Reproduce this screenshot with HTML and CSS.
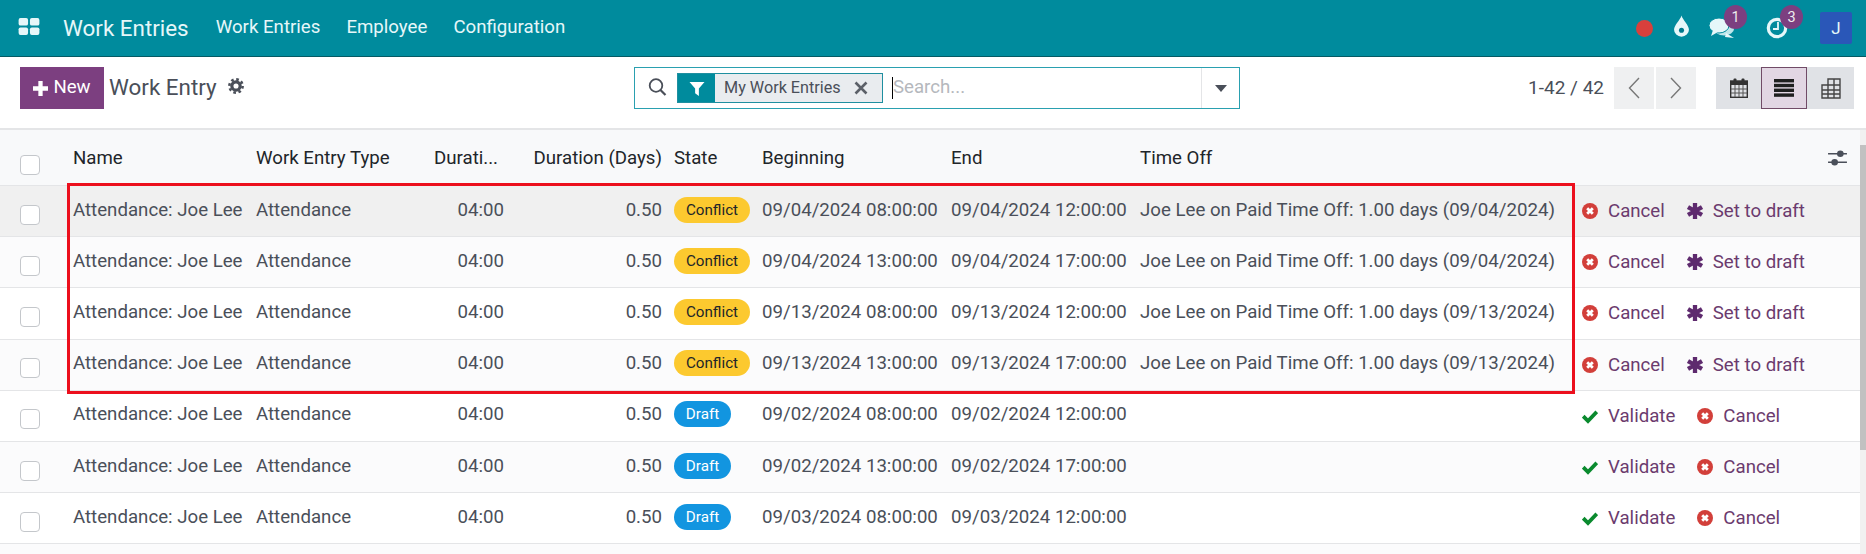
FILE: index.html
```html
<!DOCTYPE html>
<html lang="en">
<head>
<meta charset="utf-8">
<title>Work Entries</title>
<link rel="stylesheet" href="styles.css">
</head>
<body>
<header class="navbar">
  <svg class="apps" viewBox="0 0 22 18"><rect x="0" y="0" width="10" height="8" rx="2"/><rect x="12" y="0" width="10" height="8" rx="2"/><rect x="0" y="10" width="10" height="8" rx="2"/><rect x="12" y="10" width="10" height="8" rx="2"/></svg>
  <span class="brand">Work Entries</span>
  <nav class="menu"><a>Work Entries</a><a>Employee</a><a>Configuration</a></nav>
  <div class="systray">
    <span class="dot"></span>
    <svg class="drop" viewBox="0 0 16 20"><path d="M8 0C9 4 15 9 15 13.5A7 6.5 0 0 1 1 13.5C1 9 7 4 8 0Z" fill="#e6f7f9"/><circle cx="8" cy="14" r="2.4" fill="#00798c"/></svg>
    <span class="tray-item chat">
      <svg viewBox="0 0 26 22"><ellipse cx="15" cy="12" rx="10" ry="6.5" fill="#bfe6ea"/><path d="M17 16l8 5-9-1z" fill="#e6f7f9"/><ellipse cx="10" cy="8.5" rx="10" ry="7.5" fill="#e6f7f9" stroke="#008b9d"/><path d="M4 13l-2 6 7-4z" fill="#e6f7f9"/></svg>
      <span class="badge">1</span>
    </span>
    <span class="tray-item clock">
      <svg viewBox="0 0 22 22"><circle cx="11" cy="11" r="8.7" fill="none" stroke="#e6f7f9" stroke-width="3.2"/><path d="M12 5v7H7" fill="none" stroke="#e6f7f9" stroke-width="1.8"/></svg>
      <span class="badge">3</span>
    </span>
    <span class="avatar">J</span>
  </div>
</header>

<section class="control">
  <div class="title-side">
    <button class="new"><svg viewBox="0 0 14 14"><path d="M5 0h4v5h5v4H9v5H5V9H0V5h5z"/></svg><span class="lift">New</span></button>
    <span class="crumb lift">Work Entry</span>
    <svg class="gear" viewBox="0 0 20 20"><circle cx="10" cy="10" r="5.2" fill="none" stroke="#4a4f59" stroke-width="4"/><circle cx="10" cy="10" r="8.3" fill="none" stroke="#4a4f59" stroke-width="3.2" stroke-dasharray="3.3 3.22"/></svg>
  </div>
  <div class="search">
    <svg class="mag" viewBox="0 0 18 18"><circle cx="7.5" cy="7.5" r="6.3" fill="none" stroke="#4a4f59" stroke-width="1.8"/><path d="M12 12l5 5" stroke="#4a4f59" stroke-width="2.2"/></svg>
    <div class="chip">
      <span class="chip-icon"><svg viewBox="0 0 16 16"><path d="M0 1h16L10 8v8l-4-3V8z" fill="#fff"/></svg></span>
      <span class="chip-label lift">My Work Entries</span>
      <svg class="chip-x" viewBox="0 0 14 14"><path d="M1.5 1.5l11 11M12.5 1.5l-11 11" stroke="#5b6068" stroke-width="2.6"/></svg>
    </div>
    <span class="caret"></span>
    <input class="search-input" placeholder="Search...">
    <span class="search-drop"><svg viewBox="0 0 12 7"><path d="M0 0h12L6 7z" fill="#4a4f59"/></svg></span>
  </div>
  <div class="right-side">
    <span class="pager-text lift">1-42 / 42</span>
    <div class="pager">
      <span class="pg"><svg viewBox="0 0 12 22"><path d="M11 1L1.5 11 11 21" fill="none" stroke="#777" stroke-width="1.4"/></svg></span>
      <span class="pg"><svg viewBox="0 0 12 22"><path d="M1 1l9.500 10L1 21" fill="none" stroke="#777" stroke-width="1.4"/></svg></span>
    </div>
    <div class="views">
      <span class="view v1"><svg viewBox="0 0 18 20"><rect x="0.700" y="3" width="16.600" height="16.300" fill="none" stroke="#333" stroke-width="1.400"/><rect x="1" y="3" width="16" height="4" fill="#333"/><path d="M1 11h16M1 15h16M5 7v12M9 7v12M13 7v12" stroke="#555"/><rect x="3.500" y="0.500" width="3" height="5" rx="1" fill="#333"/><rect x="11.500" y="0.500" width="3" height="5" rx="1" fill="#333"/></svg></span>
      <span class="view v2 active"><svg viewBox="0 0 20 18"><rect width="20" height="3.400"/><rect y="4.800" width="20" height="3.400"/><rect y="9.600" width="20" height="3.400"/><rect y="14.400" width="20" height="3.400"/></svg></span>
      <span class="view v3"><svg viewBox="0 0 20 21"><path d="M7 1h12v19H1V7h6zM7 1v19M13 1v19M1 12h18M1 16h18M7 7h12" fill="none" stroke="#444" stroke-width="1.400"/></svg></span>
    </div>
  </div>
</section>

<main class="list">
  <div class="row head">
    <span class="cb"><input type="checkbox"></span>
    <span>Name</span><span>Work Entry Type</span><span class="ell">Durati...</span><span class="num">Duration (Days)</span><span>State</span><span>Beginning</span><span>End</span><span>Time Off</span>
    <span class="opt"><svg viewBox="0 0 20 18"><path d="M0 4h20M0 13h20" stroke="#4a4f59" stroke-width="1.400"/><circle cx="13" cy="4" r="3.500" fill="#4a4f59"/><circle cx="7" cy="13" r="3.500" fill="#4a4f59"/></svg></span>
  </div>

  <div class="row body hover">
    <span class="cb"><input type="checkbox"></span><span>Attendance: Joe Lee</span><span>Attendance</span><span class="num">04:00</span><span class="num">0.50</span><span><b class="pill conflict">Conflict</b></span><span>09/04/2024 08:00:00</span><span>09/04/2024 12:00:00</span><span>Joe Lee on Paid Time Off: 1.00 days (09/04/2024)</span>
    <span class="acts"><a><svg class="ic" viewBox="0 0 16 16"><use href="#i-x"/></svg>Cancel</a><a><svg class="ic" viewBox="0 0 16 16"><use href="#i-star"/></svg>Set to draft</a></span>
  </div>
  <div class="row body">
    <span class="cb"><input type="checkbox"></span><span>Attendance: Joe Lee</span><span>Attendance</span><span class="num">04:00</span><span class="num">0.50</span><span><b class="pill conflict">Conflict</b></span><span>09/04/2024 13:00:00</span><span>09/04/2024 17:00:00</span><span>Joe Lee on Paid Time Off: 1.00 days (09/04/2024)</span>
    <span class="acts"><a><svg class="ic" viewBox="0 0 16 16"><use href="#i-x"/></svg>Cancel</a><a><svg class="ic" viewBox="0 0 16 16"><use href="#i-star"/></svg>Set to draft</a></span>
  </div>
  <div class="row body">
    <span class="cb"><input type="checkbox"></span><span>Attendance: Joe Lee</span><span>Attendance</span><span class="num">04:00</span><span class="num">0.50</span><span><b class="pill conflict">Conflict</b></span><span>09/13/2024 08:00:00</span><span>09/13/2024 12:00:00</span><span>Joe Lee on Paid Time Off: 1.00 days (09/13/2024)</span>
    <span class="acts"><a><svg class="ic" viewBox="0 0 16 16"><use href="#i-x"/></svg>Cancel</a><a><svg class="ic" viewBox="0 0 16 16"><use href="#i-star"/></svg>Set to draft</a></span>
  </div>
  <div class="row body">
    <span class="cb"><input type="checkbox"></span><span>Attendance: Joe Lee</span><span>Attendance</span><span class="num">04:00</span><span class="num">0.50</span><span><b class="pill conflict">Conflict</b></span><span>09/13/2024 13:00:00</span><span>09/13/2024 17:00:00</span><span>Joe Lee on Paid Time Off: 1.00 days (09/13/2024)</span>
    <span class="acts"><a><svg class="ic" viewBox="0 0 16 16"><use href="#i-x"/></svg>Cancel</a><a><svg class="ic" viewBox="0 0 16 16"><use href="#i-star"/></svg>Set to draft</a></span>
  </div>
  <div class="row body">
    <span class="cb"><input type="checkbox"></span><span>Attendance: Joe Lee</span><span>Attendance</span><span class="num">04:00</span><span class="num">0.50</span><span><b class="pill draft">Draft</b></span><span>09/02/2024 08:00:00</span><span>09/02/2024 12:00:00</span><span></span>
    <span class="acts"><a><svg class="ic" viewBox="0 0 16 16"><use href="#i-check"/></svg>Validate</a><a><svg class="ic" viewBox="0 0 16 16"><use href="#i-x"/></svg>Cancel</a></span>
  </div>
  <div class="row body">
    <span class="cb"><input type="checkbox"></span><span>Attendance: Joe Lee</span><span>Attendance</span><span class="num">04:00</span><span class="num">0.50</span><span><b class="pill draft">Draft</b></span><span>09/02/2024 13:00:00</span><span>09/02/2024 17:00:00</span><span></span>
    <span class="acts"><a><svg class="ic" viewBox="0 0 16 16"><use href="#i-check"/></svg>Validate</a><a><svg class="ic" viewBox="0 0 16 16"><use href="#i-x"/></svg>Cancel</a></span>
  </div>
  <div class="row body">
    <span class="cb"><input type="checkbox"></span><span>Attendance: Joe Lee</span><span>Attendance</span><span class="num">04:00</span><span class="num">0.50</span><span><b class="pill draft">Draft</b></span><span>09/03/2024 08:00:00</span><span>09/03/2024 12:00:00</span><span></span>
    <span class="acts"><a><svg class="ic" viewBox="0 0 16 16"><use href="#i-check"/></svg>Validate</a><a><svg class="ic" viewBox="0 0 16 16"><use href="#i-x"/></svg>Cancel</a></span>
  </div>
  <div class="row body"></div>

  <div class="highlight"></div>
  <div class="scrollbar"><span class="thumb"></span></div>
</main>

<svg class="defs" width="0" height="0">
  <symbol id="i-x" viewBox="0 0 16 16"><circle cx="8" cy="8" r="8" fill="#d23f3a"/><path d="M5.200 5.200l5.600 5.600M10.800 5.200l-5.600 5.600" stroke="#fff" stroke-width="2.800"/></symbol>
  <symbol id="i-star" viewBox="0 0 16 16"><path d="M8 8V0M8 8l7-4M8 8l7 4M8 8v8M8 8l-7 4M8 8L1 4" stroke="#5e2a6e" stroke-width="4.300"/></symbol>
  <symbol id="i-check" viewBox="0 0 16 16"><path d="M1.200 8.200l4.800 4.800L14.800 3.800" fill="none" stroke="#0a8a2e" stroke-width="3.800"/></symbol>
</svg>
</body>
</html>
```
FILE: styles.css
```css
* { box-sizing: border-box; }
html, body { margin: 0; height: 100%; overflow: hidden; }
body { font-family: Roboto, "Noto Sans", sans-serif; font-size: 18.660px; color: #4a4f59; background: #fff; }
svg { display: block; }
.defs { position: absolute; }
.lift { padding-bottom: 2px; }

.navbar { height: 57px; background: #008b9d; border-bottom: 1px solid #045a64; display: flex; align-items: center; padding-left: 18px; color: #e6f7f9; }
.apps { width: 22px; height: 17px; fill: #e6f7f9; margin-bottom: 4px; }
.brand { font-size: 22.400px; margin-left: 23px; margin-right: 27px; }
.menu { display: flex; gap: 26px; font-size: 18.660px; margin-bottom: 2px; }
.systray { margin-left: auto; display: flex; align-items: center; padding-right: 14px; }
.dot { width: 17px; height: 17px; border-radius: 50%; background: #d8403c; margin-right: 20px; }
.drop { width: 17px; height: 22px; margin-bottom: 4px; margin-right: 19px; }
.tray-item { position: relative; display: block; }
.chat { width: 26px; height: 22px; margin-right: 31px; }
.chat svg { width: 26px; height: 22px; }
.clock { width: 22px; height: 22px; margin-right: 32px; }
.clock svg { width: 22px; height: 22px; }
.badge { position: absolute; top: -12px; left: 15px; width: 23px; height: 24px; border-radius: 50%; background: #7c3f80; color: #eee; font-size: 14.500px; display: flex; align-items: center; justify-content: center; }
.clock .badge { left: 14px; }
.avatar { width: 32px; height: 32px; background: #2a57b8; color: #e6f7f9; display: flex; align-items: center; justify-content: center; font-size: 17px; border-radius: 2px; }

.control { height: 73px; border-bottom: 2px solid #e4e5e7; display: flex; padding: 10px 12px 0 20px; align-items: flex-start; }
.title-side { width: 614px; display: flex; align-items: center; height: 42px; }
.new { width: 84px; height: 42px; background: #7c3f80; border: 0; color: #fff; font: inherit; display: flex; align-items: center; justify-content: center; gap: 5px; padding: 0; }
.new svg { width: 15px; height: 15px; fill: #fff; }
.crumb { font-size: 22.400px; margin-left: 5px; }
.gear { width: 16px; height: 16px; margin-left: 11px; margin-bottom: 4px; }

.search { width: 606px; height: 42px; border: 1px solid #2aa0b0; display: flex; align-items: center; padding-left: 13px; }
.mag { width: 19px; height: 18px; margin-bottom: 2px; }
.chip { display: flex; align-items: center; width: 206px; height: 30px; margin-left: 10px; border: 1px solid #1f8fa0; background: #e9ecef; }
.chip-icon { width: 37px; height: 100%; background: #008b9d; display: flex; align-items: center; justify-content: center; }
.chip-icon svg { width: 16px; height: 15px; }
.chip-label { margin-left: 9px; font-size: 16.200px; width: 120px; white-space: nowrap; }
.chip-x { width: 14px; height: 14px; margin-left: 10px; }
.caret { width: 1px; height: 22px; background: #000; margin-left: 9px; flex: none; }
.search-input { flex: 1; min-width: 0; border: 0; outline: 0; padding: 0 0 2px; font: inherit; background: transparent; }
.search-input::placeholder { color: #b5b8bd; }
.search-drop { width: 38px; height: 100%; border-left: 1px solid #e4e5e7; display: flex; align-items: center; justify-content: center; }
.search-drop svg { width: 12px; height: 7px; }

.right-side { margin-left: auto; display: flex; align-items: center; height: 42px; }
.pager-text { font-size: 19px; margin-right: 10px; }
.pager { display: flex; gap: 2px; margin-right: 20px; }
.pg { width: 40px; height: 42px; background: #eff0f1; display: flex; align-items: center; justify-content: center; }
.pg svg { width: 12px; height: 22px; }
.views { display: flex; }
.view { height: 42px; background: #e0e2e6; display: flex; align-items: center; justify-content: center; }
.v1 { width: 45px; }
.v2 { width: 46px; }
.v3 { width: 47px; }
.view.active { background: #e2d6e3; border: 1px solid #714b67; }
.v1 svg { width: 18px; height: 20px; }
.v2 svg { width: 20px; height: 18px; fill: #1f1f1f; }
.v3 svg { width: 20px; height: 21px; }

.list { position: relative; padding-right: 6px; height: 424px; overflow: hidden; }
.row { display: grid; grid-template-columns: 67px 183px 178px 82px 158px 88px 189px 189px 442px 1fr; align-items: center; white-space: nowrap; }
.row > span { padding: 0 6px; }
.head { height: 56px; background: #f8f9fa; color: #212529; border-bottom: 1px solid #e4e5e7; padding-top: 1px; }
.row > .cb { padding: 0 0 0 20px; }
.cb input { appearance: none; display: block; width: 20px; height: 20px; margin: 10px 0 0; border: 1px solid #c4c7cb; border-radius: 4px; background: #fff; }
.head .cb input { margin-top: 14px; }
.num { text-align: right; }
.row > .opt { justify-self: end; padding: 0 13px 0 0; }
.opt svg { width: 19px; height: 17px; }
.body { height: 51.200px; border-bottom: 1px solid #e4e5e7; padding-bottom: 3px; }
.body:nth-child(odd) { background: #fbfbfc; }
.body.hover { background: #f0f0f0; }
.pill { display: flex; align-items: center; justify-content: center; height: 26px; border-radius: 13px; font-weight: 400; font-size: 15.200px; }
.conflict { width: 76px; background: #fcc92f; color: #212529; }
.draft { width: 57px; background: #1295e0; color: #fff; }
.row > .acts { display: flex; gap: 22px; color: #6b3b6e; padding-top: 3px; }
.acts a { display: flex; align-items: center; }
.ic { width: 16px; height: 16px; margin-right: 10px; }

.highlight { position: absolute; left: 67px; top: 53px; width: 1508px; height: 211px; border: 3px solid #ec0f1d; }
.scrollbar { position: absolute; top: 0; right: 0; bottom: 0; width: 6px; background: #f1f1f1; height: 424px; }
.thumb { position: absolute; top: 15px; left: 0; width: 6px; height: 305px; background: #c1c1c1; }
```
